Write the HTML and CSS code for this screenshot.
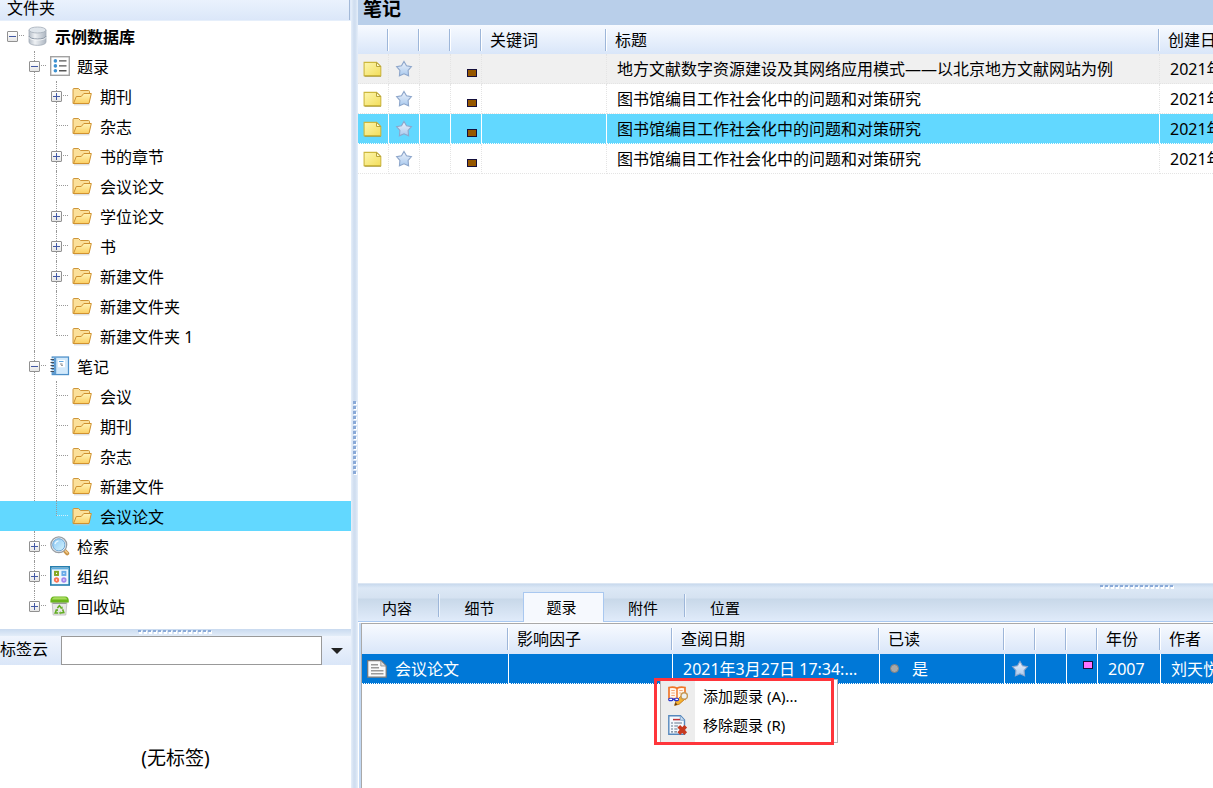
FILE: index.html
```html
<!DOCTYPE html>
<html lang="zh-CN">
<head>
    <meta charset="utf-8">
    <title>示例数据库</title>
    <link rel="stylesheet" href="styles.css">
</head>
<body>
    <svg class="sprite" aria-hidden="true">
        <defs>
            <linearGradient id="gFolder" x1="0" y1="0" x2="0" y2="1"><stop offset="0" stop-color="#fff3b8"/><stop offset="1" stop-color="#fbcf62"/></linearGradient>
            <linearGradient id="gNote" x1="0" y1="0" x2="1" y2="1"><stop offset="0" stop-color="#fdf6ae"/><stop offset="1" stop-color="#f3de5c"/></linearGradient>
            <linearGradient id="gStar" x1="0" y1="0" x2="0" y2="1"><stop offset="0" stop-color="#eef3fb"/><stop offset="1" stop-color="#a9c9ee"/></linearGradient>
            <linearGradient id="gDisk" x1="0" y1="0" x2="1" y2="0"><stop offset="0" stop-color="#b4bcc6"/><stop offset="0.35" stop-color="#eef1f4"/><stop offset="1" stop-color="#adb6c1"/></linearGradient>
            <linearGradient id="gLens" x1="0" y1="0" x2="1" y2="1"><stop offset="0" stop-color="#8cc8f5"/><stop offset="1" stop-color="#d4f3fc"/></linearGradient>
        </defs>
        <symbol id="folder" viewBox="0 0 20 20">
            <path d="M1 3.5 Q1 2.5 2 2.5 H6.5 L8.5 4.5 H16.5 Q17.5 4.5 17.5 5.5 V16 L3 17.5 H1 Z" fill="#fbe09a" stroke="#cf963a"/>
            <path d="M1.5 17.5 L4.3 10.5 H9.2 L11.8 7.5 H19.3 L17 17.5 Z" fill="url(#gFolder)" stroke="#d0912f"/>
            <path d="M2 18.8 H17.5" stroke="#c8c8c8" stroke-width="0.8"/>
        </symbol>
        <symbol id="database" viewBox="0 0 20 20">
            <path d="M1 4 V16 C1 20.5 18 20.5 18 16 V4 Z" fill="url(#gDisk)" stroke="#a3acb7" stroke-width="0.8"/>
            <ellipse cx="9.5" cy="4" rx="8.5" ry="3" fill="#dfe5eb" stroke="#a3acb7" stroke-width="0.8"/>
            <path d="M1 10 C1 14 18 14 18 10" fill="none" stroke="#8f9aa8"/>
            <path d="M1 11.2 C1 15 18 15 18 11.2" fill="none" stroke="#fff" stroke-width="0.7"/>
        </symbol>
        <symbol id="list" viewBox="0 0 20 20">
            <rect x="0.7" y="0.7" width="18.6" height="18.6" fill="#fff" stroke="#a2a2a2" stroke-width="1.4"/>
            <g fill="#3e92d2"><circle cx="5.4" cy="4.9" r="1.8"/><circle cx="5.4" cy="9.9" r="1.8"/><circle cx="5.4" cy="14.8" r="1.8"/></g>
            <path d="M9 4.9 H16.5 M9 9.9 H16.5 M9 14.8 H16.5" stroke="#555" stroke-width="1.4"/>
        </symbol>
        <symbol id="notebook" viewBox="0 0 20 20">
            <rect x="2.2" y="1" width="16.3" height="17.6" fill="#b9daf4" stroke="#4d8fc8" stroke-width="1.2"/>
            <rect x="6.2" y="2" width="11.3" height="15.6" fill="#d2e9fb"/>
            <rect x="2.8" y="1.6" width="3.4" height="16.4" fill="#5e9bd0"/>
            <rect x="8" y="4" width="7" height="7.3" fill="#fff"/>
            <path d="M9 5.5 H13.5" stroke="#5ca4dc"/><path d="M10 8 H12.5 M11 9.3 H13" stroke="#8a8a8a"/>
            <path d="M0.5 3.5 H4 M0.5 6.5 H4 M0.5 9.5 H4 M0.5 12.5 H4 M0.5 15.5 H4" stroke="#454f5c" stroke-width="1.1"/>
            <path d="M1 2.5 H4 M1 5.5 H4 M1 8.5 H4 M1 11.5 H4 M1 14.5 H4" stroke="#eef5fb" stroke-width="0.8"/>
        </symbol>
        <symbol id="search" viewBox="0 0 20 20">
            <path d="M14.5 14.5 L17.2 17.4" stroke="#c89347" stroke-width="4" stroke-linecap="round"/>
            <path d="M15 14.5 L17.2 16.8" stroke="#f0c98a" stroke-width="1.6" stroke-linecap="round"/>
            <circle cx="8.8" cy="8.8" r="7.9" fill="#f2f2f2" stroke="#979da3" stroke-width="1.3"/>
            <circle cx="8.8" cy="8.8" r="6.1" fill="url(#gLens)" stroke="#6aa5d6"/>
            <path d="M5 8.2 Q5.5 5.2 8.5 4.8" fill="none" stroke="#e8f7ff" stroke-width="1.3"/>
        </symbol>
        <symbol id="organize" viewBox="0 0 20 20">
            <rect x="0.8" y="0.8" width="18.4" height="18.2" fill="#eff7fd" stroke="#257eae" stroke-width="1.6"/>
            <path d="M2 2.7 H18" stroke="#5faee0" stroke-width="1.4"/>
            <g fill="#fff" stroke-width="1.9"><rect x="5" y="5.8" width="3" height="3.2" stroke="#84a51d"/><rect x="12.4" y="5.8" width="3" height="3.2" stroke="#68aae8"/><circle cx="6.5" cy="14" r="1.7" stroke="#fb7350"/><circle cx="13.9" cy="14" r="1.7" stroke="#a487ed"/></g>
        </symbol>
        <symbol id="recycle" viewBox="0 0 20 20">
            <path d="M2 6 H17 L15.8 19 H3.2 Z" fill="#e7e7e7" stroke="#bababa" stroke-width="0.8"/>
            <path d="M2.5 6.5 H16.5 V8 H2.6 Z" fill="#9a9a9a"/>
            <path d="M0.4 5 Q0.4 0.5 4 0.5 H15.3 Q18.8 0.5 18.8 5 V6.4 H0.4 Z" fill="#69b51b"/>
            <path d="M2 3.4 Q2.5 1.3 4.5 1.3 H14.8 Q16.6 1.3 17.2 3.4 Z" fill="#a8dc5d"/>
            <path d="M7.4 12.1 L9.4 9.8 L11.4 12.1 M12.6 13.4 L13.8 16.5 L10.5 17 M8.2 17 H5.2 L6.5 13.8" fill="none" stroke="#62ad22" stroke-width="1.6"/>
            <path d="M10.3 12.7 L12.8 12.8 L12.4 10.3 Z M10.7 15.2 V18.6 L8.9 17 Z M5 13.9 L7.6 12.8 L8.2 15.3 Z" fill="#62ad22"/>
        </symbol>
        <symbol id="note" viewBox="0 0 18 16">
            <path d="M0.6 1.4 H13 L17.3 5.5 V14.6 H0.6 Z" fill="url(#gNote)" stroke="#cdb73c" stroke-width="1.1"/>
            <path d="M13 1.4 V5.5 H17.3 Z" fill="#fdf8c8" stroke="#b8a339" stroke-width="1"/>
            <path d="M1 15.5 H17.5" stroke="#a79734" stroke-width="0.7"/>
        </symbol>
        <symbol id="star" viewBox="0 0 18 18">
            <path d="M9 1.4 L11.5 5.8 L16.4 6.6 L13.1 10.5 L13.6 15.8 L9 13.8 L4.4 15.8 L4.9 10.5 L1.6 6.6 L6.5 5.8 Z" fill="url(#gStar)" stroke="#8da6cb" stroke-width="1.1"/>
        </symbol>
        <symbol id="page" viewBox="0 0 20 18">
            <path d="M0.7 0.7 H14 L19.2 6 V17.2 H0.7 Z" fill="#fafafa" stroke="#777" stroke-width="1.2"/>
            <path d="M13.8 0.7 V6 H19.2 Z" fill="#ddd" stroke="#888" stroke-width="0.8"/>
            <path d="M4 4.7 H11 M4 7.7 H12 M4 10.7 H16.5 M4 13.7 H16.5" stroke="#9a9a9a" stroke-width="1.6"/>
        </symbol>
        <symbol id="addref" viewBox="0 0 20 20">
            <path d="M1 1.5 Q5.5 0.3 9 2.2 Q12.5 0.3 17 1.5 V13.2 Q12.5 12 9 13.7 Q5.5 12 1 13.2 Z" fill="#fff6ec" stroke="#ef762a" stroke-width="1.7"/>
            <path d="M9 2 V13.5" stroke="#ef762a" stroke-width="1.5"/>
            <path d="M3.3 4.5 H6.8 M3.3 7 H6.8 M3.3 9.5 H6.8 M11.2 4.5 H14.7 M11.2 7 H13" stroke="#f2a777" stroke-width="1.1"/>
            <path d="M6.6 19.4 L8 15 L13.4 9.5 L17 13 L11.2 18.2 Z" fill="#f6b22e" stroke="#c27517" stroke-width="0.9"/>
            <path d="M6.6 19.4 L7.5 16.6 L9.5 18.5 Z" fill="#5c3c17"/>
            <circle cx="16.2" cy="9.9" r="3.2" fill="#edf0f2" stroke="#c59a58" stroke-width="1.4"/>
            <g fill="#fff" stroke="#2837cf" stroke-width="1.1"><rect x="0.7" y="12.2" width="4.3" height="2.4" rx="1.2"/><rect x="6.3" y="12.2" width="4.3" height="2.4" rx="1.2"/><path d="M4 13.4 H7.5"/></g>
        </symbol>
        <symbol id="removeref" viewBox="0 0 20 20">
            <path d="M0.8 0.8 H12.5 L16.5 5 V19.2 H0.8 Z" fill="#f5f9fe" stroke="#5688bd" stroke-width="1.4"/>
            <path d="M12.3 1 V5.2 H16.3" fill="#cfdff0" stroke="#83a7ce"/>
            <path d="M5 4.6 H12" stroke="#bd3439" stroke-width="1.5"/>
            <path d="M3 8 H5 M6.3 8 H14 M3 11 H5 M6.3 11 H10 M3 14 H5 M6.3 14 H9.5 M3 16.8 H5 M6.3 16.8 H9" stroke="#66778b" stroke-width="1.2"/>
            <path d="M10.8 11.2 L17.7 18.6 M17.7 11.2 L10.8 18.6" stroke="#c73a20" stroke-width="3.8"/>
        </symbol>
    </svg>

    <aside class="sidebar">
        <div class="side-title">文件夹</div>
        <ul class="tree">
            <li class="root">
                <div class="row"><span class="twig"><button class="toggle minus" aria-label="折叠"></button></span><svg class="icon"><use href="#database"/></svg><b>示例数据库</b></div>
                <ul>
                    <li class="l1">
                        <div class="row"><span class="twig"><button class="toggle minus" aria-label="折叠"></button></span><svg class="icon"><use href="#list"/></svg>题录</div>
                        <ul>
                            <li class="l2"><div class="row"><span class="twig"><button class="toggle" aria-label="展开"></button></span><svg class="icon"><use href="#folder"/></svg>期刊</div></li>
                            <li class="l2"><div class="row"><span class="twig"></span><svg class="icon"><use href="#folder"/></svg>杂志</div></li>
                            <li class="l2"><div class="row"><span class="twig"><button class="toggle" aria-label="展开"></button></span><svg class="icon"><use href="#folder"/></svg>书的章节</div></li>
                            <li class="l2"><div class="row"><span class="twig"></span><svg class="icon"><use href="#folder"/></svg>会议论文</div></li>
                            <li class="l2"><div class="row"><span class="twig"><button class="toggle" aria-label="展开"></button></span><svg class="icon"><use href="#folder"/></svg>学位论文</div></li>
                            <li class="l2"><div class="row"><span class="twig"><button class="toggle" aria-label="展开"></button></span><svg class="icon"><use href="#folder"/></svg>书</div></li>
                            <li class="l2"><div class="row"><span class="twig"><button class="toggle" aria-label="展开"></button></span><svg class="icon"><use href="#folder"/></svg>新建文件</div></li>
                            <li class="l2"><div class="row"><span class="twig"></span><svg class="icon"><use href="#folder"/></svg>新建文件夹</div></li>
                            <li class="l2"><div class="row"><span class="twig"></span><svg class="icon"><use href="#folder"/></svg>新建文件夹 1</div></li>
                        </ul>
                    </li>
                    <li class="l1">
                        <div class="row"><span class="twig"><button class="toggle minus" aria-label="折叠"></button></span><svg class="icon"><use href="#notebook"/></svg>笔记</div>
                        <ul>
                            <li class="l2"><div class="row"><span class="twig"></span><svg class="icon"><use href="#folder"/></svg>会议</div></li>
                            <li class="l2"><div class="row"><span class="twig"></span><svg class="icon"><use href="#folder"/></svg>期刊</div></li>
                            <li class="l2"><div class="row"><span class="twig"></span><svg class="icon"><use href="#folder"/></svg>杂志</div></li>
                            <li class="l2"><div class="row"><span class="twig"></span><svg class="icon"><use href="#folder"/></svg>新建文件</div></li>
                            <li class="l2"><div class="row selected"><span class="twig"></span><svg class="icon"><use href="#folder"/></svg>会议论文</div></li>
                        </ul>
                    </li>
                    <li class="l1"><div class="row"><span class="twig"><button class="toggle" aria-label="展开"></button></span><svg class="icon"><use href="#search"/></svg>检索</div></li>
                    <li class="l1"><div class="row"><span class="twig"><button class="toggle" aria-label="展开"></button></span><svg class="icon"><use href="#organize"/></svg>组织</div></li>
                    <li class="l1"><div class="row"><span class="twig"><button class="toggle" aria-label="展开"></button></span><svg class="icon"><use href="#recycle"/></svg>回收站</div></li>
                </ul>
            </li>
        </ul>
        <div class="split-h"><span class="grip-h"></span></div>
        <div class="tag-bar">
            <label for="tag">标签云</label>
            <input type="text" id="tag" name="tag">
            <button class="drop" aria-label="选项"></button>
        </div>
        <div class="tag-cloud">(无标签)</div>
    </aside>

    <div class="split-v"><span class="grip-v"></span></div>

    <main class="main">
        <h1 class="main-title">笔记</h1>
        <div class="notes-pane">
            <table class="grid notes">
                <colgroup>
                    <col class="w-icon"><col class="w-icon"><col class="w-icon"><col class="w-icon"><col class="w-keyword"><col><col class="w-created">
                </colgroup>
                <thead>
                    <tr><th></th><th></th><th></th><th></th><th>关键词</th><th>标题</th><th>创建日期</th></tr>
                </thead>
                <tbody>
                    <tr class="current"><td class="pic"><svg class="note"><use href="#note"/></svg></td><td class="pic"><svg class="star"><use href="#star"/></svg></td><td></td><td class="pic"><i class="mark"></i></td><td></td><td>地方文献数字资源建设及其网络应用模式——以北京地方文献网站为例</td><td>2021年3月27日</td></tr>
                    <tr><td class="pic"><svg class="note"><use href="#note"/></svg></td><td class="pic"><svg class="star"><use href="#star"/></svg></td><td></td><td class="pic"><i class="mark"></i></td><td></td><td>图书馆编目工作社会化中的问题和对策研究</td><td>2021年3月27日</td></tr>
                    <tr class="selected"><td class="pic"><svg class="note"><use href="#note"/></svg></td><td class="pic"><svg class="star"><use href="#star"/></svg></td><td></td><td class="pic"><i class="mark"></i></td><td></td><td>图书馆编目工作社会化中的问题和对策研究</td><td>2021年3月27日</td></tr>
                    <tr><td class="pic"><svg class="note"><use href="#note"/></svg></td><td class="pic"><svg class="star"><use href="#star"/></svg></td><td></td><td class="pic"><i class="mark"></i></td><td></td><td>图书馆编目工作社会化中的问题和对策研究</td><td>2021年3月27日</td></tr>
                </tbody>
            </table>
        </div>

        <div class="tabs">
            <button class="tab">内容</button>
            <button class="tab">细节</button>
            <button class="tab active">题录</button>
            <button class="tab">附件</button>
            <button class="tab">位置</button>
            <span class="grip-h"></span>
        </div>
        <div class="detail">
            <table class="grid refs">
                <colgroup>
                    <col class="w-type"><col class="w-factor"><col class="w-date"><col class="w-read"><col class="w-icon"><col class="w-icon"><col class="w-icon"><col class="w-year"><col>
                </colgroup>
                <thead>
                    <tr><th></th><th>影响因子</th><th>查阅日期</th><th>已读</th><th></th><th></th><th></th><th>年份</th><th>作者</th></tr>
                </thead>
                <tbody>
                    <tr class="focus">
                        <td class="type"><svg class="page"><use href="#page"/></svg>会议论文</td>
                        <td></td>
                        <td>2021年3月27日 17:34:...</td>
                        <td><i class="dot"></i>是</td>
                        <td class="pic"><svg class="star"><use href="#star"/></svg></td>
                        <td></td>
                        <td class="pic"><i class="mark pink"></i></td>
                        <td>2007</td>
                        <td>刘天悦</td>
                    </tr>
                </tbody>
            </table>
            <div class="menu">
                <button><svg class="icon"><use href="#addref"/></svg>添加题录 (A)...</button>
                <button><svg class="icon"><use href="#removeref"/></svg>移除题录 (R)</button>
            </div>
            <div class="highlight"></div>
        </div>
    </main>
</body>
</html>
```
FILE: styles.css
```css
* {
    box-sizing: border-box;
}

body {
    display: flex;
    height: 100vh;
    margin: 0;
    overflow: hidden;
    background: #fff;
    color: #000;
    font-family: "Noto Sans", "Noto Sans CJK SC", sans-serif;
    font-size: 16px;
}

button {
    padding: 0;
    border: 0;
    background: none;
    color: inherit;
    font: inherit;
}

ul {
    margin: 0;
    padding: 0;
    list-style: none;
}

.sprite {
    position: absolute;
    width: 0;
    height: 0;
}

/* sidebar */
.sidebar {
    display: flex;
    flex: none;
    flex-direction: column;
    width: 351px;
}

.side-title {
    height: 21px;
    padding-left: 7px;
    background: linear-gradient(#eaf2fd, #dbe7f9);
    line-height: 16px;
    border-bottom: 1px solid #e6effb;
    box-shadow: inset -1px 0 #dfeafa, inset -2px 0 #a3b9d8;
}

.tree {
    flex: 1;
    overflow: hidden;
}

.tree li {
    position: relative;
}

.row {
    display: flex;
    align-items: center;
    height: 30px;
    padding-left: 7px;
    white-space: nowrap;
}

.l1 > .row {
    padding-left: 29px;
}

.l2 > .row {
    padding-left: 51px;
}

.row.selected {
    background: #62d8ff;
}

.row .icon {
    margin-right: 7px;
}

.l2 .icon {
    margin-right: 8px;
}

.icon {
    flex: none;
    width: 20px;
    height: 20px;
}

/* dotted tree lines */
.l1::before,
.l2::before {
    content: "";
    position: absolute;
    top: 0;
    bottom: 0;
    left: 34px;
    border-left: 1px dotted #999;
}

.l2::before {
    left: 56px;
}

.tree li li:last-child::before {
    bottom: auto;
    height: 15px;
}

.selected .twig::before {
    border-color: #d5f1fb;
}

.twig {
    position: relative;
    display: flex;
    align-items: center;
    width: 21px;
    height: 30px;
}

.twig::before {
    content: "";
    position: absolute;
    top: 14px;
    left: 6px;
    width: 11px;
    border-top: 1px dotted #999;
}

.toggle {
    position: relative;
    width: 11px;
    height: 11px;
    border: 1px solid #919191;
    border-radius: 1px;
    background:
        linear-gradient(#4259a5, #4259a5) center / 7px 1px no-repeat,
        linear-gradient(#4259a5, #4259a5) center / 1px 7px no-repeat,
        linear-gradient(#fff, #e6e6e6);
}

.toggle.minus {
    background:
        linear-gradient(#4259a5, #4259a5) center / 7px 1px no-repeat,
        linear-gradient(#fff, #e6e6e6);
}

/* splitters */
.split-v {
    display: flex;
    flex: none;
    align-items: center;
    justify-content: center;
    width: 7px;
    padding-top: 88px;
    background: linear-gradient(90deg, #e6effa, #d0def0 40%, #d0def0 60%, #e6effa);
}

.split-h {
    display: flex;
    flex: none;
    justify-content: center;
    height: 7px;
    background: linear-gradient(#c9daef, #e3edf9);
}

.grip-h {
    width: 75px;
    height: 5px;
    background:
        linear-gradient(90deg, #8aaad8 3px, transparent 3px) 0 1px / 5px 2px repeat-x,
        linear-gradient(90deg, #fff 3px, transparent 3px) 1px 2px / 5px 3px repeat-x;
}

.grip-v {
    width: 4px;
    height: 75px;
    background:
        linear-gradient(#8aaad8 3px, transparent 3px) 0 0 / 3px 5px repeat-y,
        linear-gradient(#fff 3px, transparent 3px) 1px 1px / 3px 5px repeat-y;
}

/* tag cloud */
.tag-bar {
    display: flex;
    flex: none;
    height: 29px;
    background: linear-gradient(#f0f5fd, #dae6f8);
}

.tag-bar label {
    width: 61px;
    line-height: 26px;
}

.tag-bar input {
    flex: 1;
    min-width: 0;
    border: 1px solid #999;
    font: inherit;
}

.drop {
    display: flex;
    align-items: center;
    justify-content: center;
    width: 29px;
}

.drop::before {
    content: "";
    border: 6px solid transparent;
    border-top-color: #222;
    border-bottom: 0;
}

.tag-cloud {
    display: flex;
    flex: none;
    align-items: center;
    justify-content: center;
    height: 123px;
    padding-top: 60px;
    font-size: 19px;
}

/* tables */
.main {
    display: flex;
    flex: 1;
    flex-direction: column;
    min-width: 0;
}

.main-title {
    flex: none;
    height: 25px;
    margin: 0;
    padding-left: 5px;
    background: #b9cfea;
    font-size: 19px;
    line-height: 18px;
}

.notes-pane {
    flex: 1;
    overflow: hidden;
}

.grid {
    width: 100%;
    border-collapse: separate;
    border-spacing: 0;
    table-layout: fixed;
}

.grid th {
    height: 29px;
    padding: 0 0 0 8px;
    background:
        linear-gradient(90deg, #9db6d9 1px, #fff 1px) right center / 2px 22px no-repeat,
        linear-gradient(#f7faff, #d9e6f9);
    font-weight: normal;
    line-height: 28px;
    text-align: left;
    white-space: nowrap;
    overflow: hidden;
}

.grid th:last-child {
    background: linear-gradient(#f7faff, #d9e6f9);
}

.grid td {
    height: 30px;
    padding: 0 0 0 10px;
    border-right: 1px dotted #e4e4e4;
    border-bottom: 1px dotted #e4e4e4;
    line-height: 28px;
    white-space: nowrap;
    overflow: hidden;
}

.grid td:last-child {
    border-right: 0;
}

.grid .current td {
    background: #f0f0f0;
}

.grid .selected td {
    background: #62d8ff;
    border-color: #fff;
    border-right-style: solid;
}

.grid .focus td {
    background: #0078d7;
    border-color: #fff;
    border-right-style: solid;
    color: #fff;
}

.grid td.pic {
    padding: 0;
}

.pic svg,
.mark {
    display: block;
    margin: 0 auto;
}

.grid .note {
    width: 19px;
    height: 16px;
    margin-left: 5px;
}

.star {
    width: 18px;
    height: 18px;
}

.mark {
    width: 10px;
    height: 8px;
    margin: 8px 4px 0 auto;
    border: 1px solid #16103c;
    background: #965800;
}

.grid .pink {
    margin-top: 0;
    margin-bottom: 8px;
    background: #ff73ff;
}

.w-icon {
    width: 31px;
}

.w-keyword {
    width: 125px;
}

.w-created {
    width: 53px;
}

/* lower pane */
.tabs {
    position: relative;
    display: flex;
    flex: none;
    align-items: flex-end;
    height: 39px;
    border-top: 1px solid #dbe6f3;
    border-bottom: 1px solid #a9c8f0;
    background: linear-gradient(#c8d9ed, #dce8f6 4px, #d5e2f1 14px, #c8d8e9 15px, #e0ebfa);
}

.tabs .grip-h {
    position: absolute;
    top: 0;
    right: 38px;
}

.tab {
    width: 82px;
    height: 27px;
    padding-right: 4px;
    background: linear-gradient(90deg, #9db6d9 1px, #eef5fd 1px) right top / 2px 23px no-repeat;
    font-size: 15px;
    line-height: 29px;
}

.tab:nth-child(2),
.tab:nth-child(5) {
    background: none;
}

.tab:nth-child(2) {
    width: 83px;
}

.tab.active {
    width: 81px;
    height: 30px;
    margin-bottom: -1px;
    border: 1px solid #a9c8f0;
    border-bottom: 0;
    background: #f6f9fe;
    line-height: 27px;
}

.detail {
    position: relative;
    flex: none;
    height: 165px;
    margin-top: 1px;
    border-top: 1px solid #a9a9a9;
    border-left: 1px solid #a9a9a9;
    margin-left: 3px;
    box-shadow: -2px 0 #c2d8f3;
}

.refs th {
    height: 30px;
    line-height: 30px;
}

.w-type {
    width: 147px;
}

.w-factor {
    width: 164px;
}

.w-date {
    width: 207px;
}

.w-read {
    width: 125px;
}

.w-year {
    width: 63px;
}

.grid td.type {
    padding-left: 5px;
}

.page {
    width: 20px;
    height: 18px;
    margin-right: 8px;
    vertical-align: -3px;
}

.dot {
    display: inline-block;
    width: 9px;
    height: 9px;
    margin-right: 13px;
    border: 1px solid #808080;
    border-radius: 50%;
    background: #a8a8a8;
    vertical-align: 2px;
}

/* context menu */
.menu {
    position: absolute;
    top: 55px;
    left: 298px;
    width: 178px;
    height: 64px;
    padding: 1px 0;
    border: 1px solid #b5b5b5;
    background: linear-gradient(90deg, #ededed 34px, #fff 34px);
}

.menu button {
    display: flex;
    align-items: center;
    width: 100%;
    height: 29px;
    padding-left: 7px;
    font-size: 15px;
}

.menu .icon {
    margin-right: 15px;
}

.highlight {
    position: absolute;
    top: 54px;
    left: 292px;
    width: 180px;
    height: 67px;
    border: 3px solid #ff353b;
    pointer-events: none;
}
```
